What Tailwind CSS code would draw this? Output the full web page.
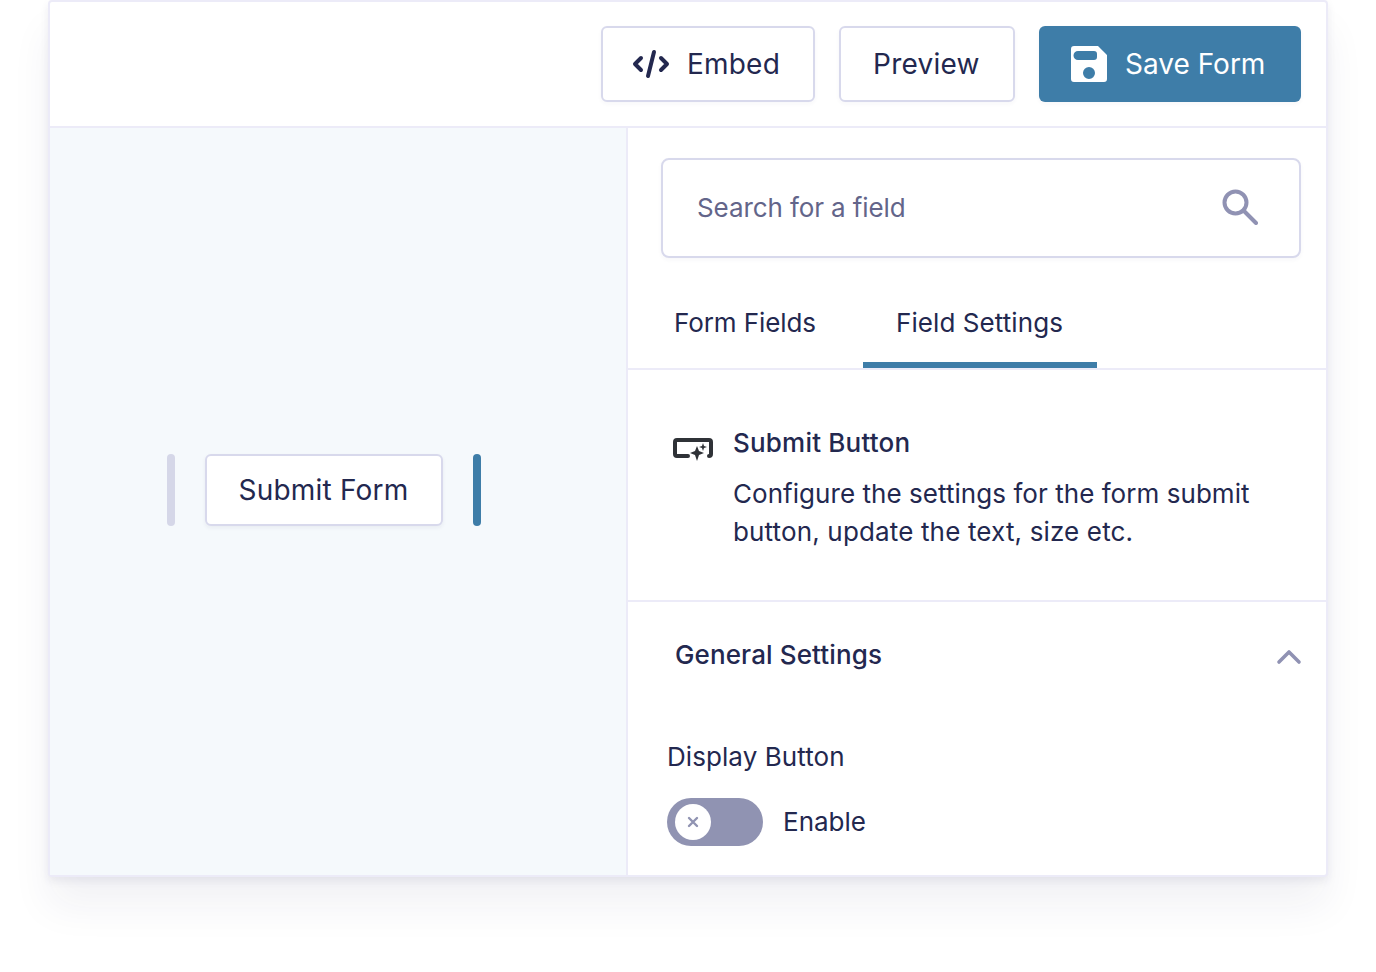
<!DOCTYPE html>
<html>
<head>
<meta charset="utf-8">
<script src="https://cdn.jsdelivr.net/npm/@tailwindcss/browser@4"></script>
</head>
<body class="bg-white">
<div class="w-[1376px] h-[972px] overflow-hidden bg-white font-['Inter',sans-serif] text-[#23284f] pl-[48px]">
  <div class="w-[1280px] h-[877px] flex flex-col bg-white border-2 border-[#ecebf8] rounded-[4px] shadow-[0_4px_8px_rgba(40,40,90,0.08),0_30px_40px_rgba(40,40,90,0.06)]">
    <header class="h-[124px] shrink-0 flex justify-end items-start gap-6 pt-[24px] pr-[25px]">
      <button class="w-[214px] h-[76px] flex items-center gap-[17px] pl-[29px] rounded-[6px] border-2 border-[#d8d9ec] bg-white text-[28px] tracking-[0.2px] shadow-[0_2px_4px_rgba(40,40,90,0.04)]">
        <svg class="w-[38px] h-[30px]" viewBox="0 0 38 30" fill="none" stroke="#23284f" stroke-width="4" stroke-linecap="round" stroke-linejoin="round"><path d="M9 9l-6 6 6 6M29 9l6 6-6 6M22 3l-6 24"/></svg>
        <span>Embed</span>
      </button>
      <button class="w-[176px] h-[76px] flex items-center pl-[32px] rounded-[6px] border-2 border-[#d8d9ec] bg-white text-[28px] tracking-[0.25px] shadow-[0_2px_4px_rgba(40,40,90,0.04)]">Preview</button>
      <button class="w-[262px] h-[76px] flex items-center gap-[18px] pl-[32px] rounded-[6px] bg-[#3e7da8] text-white text-[28px] shadow-[0_2px_4px_rgba(40,40,90,0.04)]">
        <svg class="w-[36px] h-[36px]" viewBox="0 0 36 36"><path fill="#fff" fill-rule="evenodd" d="M3 0h24l9 9v24a3 3 0 0 1-3 3H3a3 3 0 0 1-3-3V3a3 3 0 0 1 3-3zM7 5a3 3 0 0 0 0 9h16a3 3 0 0 0 3-3V8a3 3 0 0 0-3-3zM18 21a6 6 0 1 0 0 12 6 6 0 0 0 0-12z"/></svg>
        <span>Save Form</span>
      </button>
    </header>
    <main class="flex-1 flex border-t-2 border-[#ecebf8]">
      <section class="w-[576px] shrink-0 bg-[#f5f9fc] flex items-center justify-center gap-[30px] pb-[24px] pr-[29px]">
        <span class="w-2 h-[72px] rounded-full bg-[#d5d7e8]"></span>
        <div class="w-[238px] h-[72px] flex items-center pl-[32px] rounded-[6px] border-2 border-[#d8d9ec] bg-white text-[28px] tracking-[0.2px] shadow-[0_2px_4px_rgba(40,40,90,0.06)]">Submit Form</div>
        <span class="w-2 h-[72px] rounded-full bg-[#3e7da8]"></span>
      </section>
      <section class="flex-1 flex flex-col border-l-2 border-[#ecebf8]">
        <div class="pt-[30px] pl-[33px] pr-[25px]">
          <div class="h-[100px] flex items-center justify-between pl-[34px] pr-[41px] rounded-[8px] border-2 border-[#d8d9ec] bg-white shadow-[0_2px_4px_rgba(40,40,90,0.04)]">
            <span class="text-[26px] mb-[2px] tracking-[-0.1px] text-[#63658a]">Search for a field</span>
            <svg class="w-[36px] h-[36px] mb-[2px]" viewBox="0 0 36 36" fill="none" stroke="#9092b3" stroke-width="4" stroke-linecap="round"><circle cx="13.5" cy="13.5" r="11"/><path d="M22 22l12 12"/></svg>
          </div>
        </div>
        <nav class="h-[112px] flex items-stretch border-b-2 border-[#ecebf8] pl-[13px]">
          <div class="w-[222px] pl-[33px] pt-[48px] text-[26px] leading-[34px] tracking-[-0.1px]">Form Fields</div>
          <div class="w-[234px] pl-[33px] pt-[48px] text-[26px] leading-[34px] tracking-[0.08px] border-b-[6px] border-[#3e7da8]">Field Settings</div>
        </nav>
        <div class="h-[232px] shrink-0 flex border-b-2 border-[#ecebf8] pl-[45px] pt-[56px]">
          <svg class="w-[40px] h-[24px] mt-[12px] shrink-0" viewBox="0 0 40 24"><path fill="none" stroke="#2f3237" stroke-width="4" stroke-linecap="round" stroke-linejoin="round" d="M15 18H4a2 2 0 0 1-2-2V4a2 2 0 0 1 2-2h32a2 2 0 0 1 2 2v12a2 2 0 0 1-2 2"/><path fill="#2f3237" d="M24 8l2 5 5 2-5 2-2 6-2-6-5-2 5-2zM30 5l1 3 3 1-3 1-1 3-1-3-3-1 3-1z"/></svg>
          <div class="ml-[20px]">
            <div class="text-[26px] leading-[34px] font-medium tracking-[0.2px]">Submit Button</div>
            <p class="mt-[15px] text-[26px] leading-[38px]"><span class="block tracking-[0.05px]">Configure the settings for the form submit</span><span class="block tracking-[0.15px]">button, update the text, size etc.</span></p>
          </div>
        </div>
        <div class="flex-1 relative">
          <div class="flex items-center justify-between pl-[47px] pr-[24px] pt-[36px]">
            <span class="text-[26px] leading-[34px] font-medium tracking-[0.12px]">General Settings</span>
            <svg class="w-[26px] h-[16px] mt-[4px]" viewBox="0 0 26 16" fill="none" stroke="#9092b3" stroke-width="3.6" stroke-linecap="round" stroke-linejoin="round"><path d="M3 13L13 3l10 10"/></svg>
          </div>
          <div class="pl-[39px] mt-[68px] text-[26px] leading-[34px] tracking-[0.07px]">Display Button</div>
          <div class="pl-[39px] mt-[24px] flex items-center gap-[20px]">
            <div class="w-[96px] h-[48px] rounded-full bg-[#9093b2] flex items-center pl-2">
              <span class="w-9 h-9 rounded-full bg-white flex items-center justify-center">
                <svg class="w-3 h-3" viewBox="0 0 12 12" fill="none" stroke="#9093b2" stroke-width="2.4" stroke-linecap="round"><path d="M2 2l8 8M10 2l-8 8"/></svg>
              </span>
            </div>
            <span class="text-[26px] leading-[34px]">Enable</span>
          </div>
        </div>
      </section>
    </main>
  </div>
</div>
</body>
</html>
